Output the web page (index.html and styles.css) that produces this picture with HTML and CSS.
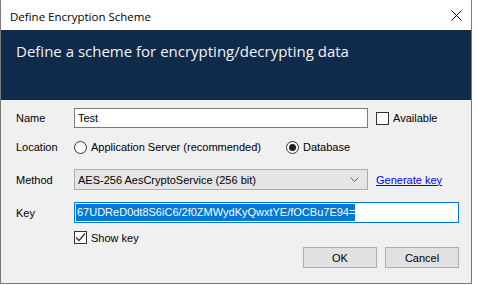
FILE: index.html
```html
<!DOCTYPE html>
<html>
<head>
<meta charset="utf-8">
<link rel="stylesheet" href="styles.css">
</head>
<body>
<div class="window">
  <div class="titlebar">
    <span class="title">Define Encryption Scheme</span>
    <svg class="close" width="11" height="11" viewBox="0 0 11 11"><path d="M0.5 0.5 L10.5 10.5 M10.5 0.5 L0.5 10.5" stroke="#000" stroke-width="1" fill="none"/></svg>
  </div>
  <div class="header">Define a scheme for encrypting/decrypting data</div>
  <div class="body">
    <div class="row row-name">
      <label class="label">Name</label>
      <div class="textbox name-box">Test</div>
      <span class="check"></span>
      <span class="text">Available</span>
    </div>
    <div class="row row-loc">
      <label class="label">Location</label>
      <span class="radio"></span>
      <span class="text">Application Server (recommended)</span>
      <span class="radio on db-radio"></span>
      <span class="text">Database</span>
    </div>
    <div class="row row-method">
      <label class="label">Method</label>
      <div class="combo">
        <span>AES-256 AesCryptoService (256 bit)</span>
        <svg class="chev" width="9" height="5" viewBox="0 0 9 5"><path d="M0.5 0.5 L4.5 4.5 L8.5 0.5" stroke="#606060" stroke-width="1" fill="none"/></svg>
      </div>
      <a class="link">Generate key</a>
    </div>
    <div class="row row-key">
      <label class="label">Key</label>
      <div class="textbox key-box"><span class="sel">67UDReD0dt8S6iC6/2f0ZMWydKyQwxtYE/fOCBu7E94=</span></div>
    </div>
    <div class="row row-show">
      <span class="label"></span>
      <span class="check checked"><svg width="11" height="11" viewBox="0 0 11 11"><path d="M1 5.5 L4 8.5 L10 1.5" stroke="#333" stroke-width="1.2" fill="none"/></svg></span>
      <span class="text">Show key</span>
    </div>
    <div class="row row-buttons">
      <button class="btn">OK</button>
      <button class="btn">Cancel</button>
    </div>
  </div>
</div>
</body>
</html>
```

FILE: styles.css
```css
html, body {
  margin: 0;
  padding: 0;
  background: #ffffff;
}
.window {
  box-sizing: border-box;
  width: 472px;
  height: 284px;
  border: 1px solid #7a7a7a;
  border-top: 0;
  background: #f0f0f0;
  font-family: "Liberation Sans", Arial, sans-serif;
  font-size: 11px;
  color: #000;
}
.titlebar {
  height: 30px;
  background: #ffffff;
  display: flex;
  align-items: center;
  justify-content: space-between;
  padding: 0 9px 0 9px;
}
.title {
  font-family: "Open Sans", "Noto Sans", sans-serif;
  font-size: 11.5px;
  padding-top: 2px;
}
.close {
  margin-right: 0;
  margin-top: 0;
}
.header {
  height: 70px;
  box-sizing: border-box;
  background: #0f2a4a;
  color: #f4f4f4;
  font-family: "Open Sans", "Noto Sans", sans-serif;
  font-size: 15px;
  padding: 11px 0 0 15px;
}
.body {
  padding: 8px 12px 0 15px;
  display: flex;
  flex-direction: column;
}
.row {
  display: flex;
  align-items: center;
}
.label {
  width: 58px;
  flex: none;
}
.textbox {
  box-sizing: border-box;
  height: 20px;
  background: #fff;
  border: 1px solid #7a7a7a;
  padding: 0 3px;
  display: flex;
  align-items: center;
}
.name-box {
  width: 294px;
}
.check {
  box-sizing: border-box;
  width: 13px;
  height: 13px;
  border: 1px solid #333;
  background: #fff;
  margin-left: 8px;
  margin-right: 4px;
  display: flex;
  align-items: center;
  justify-content: center;
}
.row-show .check {
  margin-left: 0;
}
.radio {
  box-sizing: border-box;
  width: 13px;
  height: 13px;
  border: 1px solid #333;
  border-radius: 50%;
  background: #fff;
  margin-right: 4px;
  display: flex;
  align-items: center;
  justify-content: center;
}
.radio.on::after {
  content: "";
  width: 7px;
  height: 7px;
  border-radius: 50%;
  background: #222;
}
.db-radio {
  margin-left: 25px;
}
.row-name { height: 20px; }
.row-loc { height: 20px; margin-top: 9px; }
.row-method { height: 21px; margin-top: 12px; }
.row-key { height: 21px; margin-top: 12px; }
.row-show { height: 13px; margin-top: 8px; }
.row-buttons { height: 21px; margin-top: 3px; justify-content: flex-end; gap: 8px; }
.combo {
  box-sizing: border-box;
  width: 294px;
  height: 21px;
  background: #e5e5e5;
  border: 1px solid #adadad;
  padding: 0 8px 0 3px;
  display: flex;
  align-items: center;
  justify-content: space-between;
}
.link {
  margin-left: 8px;
  color: #0000ff;
  text-decoration: underline;
}
.key-box {
  width: 385px;
  height: 21px;
  border-color: #0078d7;
  padding: 0 1px;
}
.sel {
  background: #0078d7;
  color: #fff;
  line-height: 17px;
  padding-left: 1px;
}
.btn {
  box-sizing: border-box;
  width: 74px;
  height: 21px;
  background: #e1e1e1;
  border: 1px solid #adadad;
  font-family: "Liberation Sans", Arial, sans-serif;
  font-size: 11px;
  color: #000;
  padding: 0;
}
```
